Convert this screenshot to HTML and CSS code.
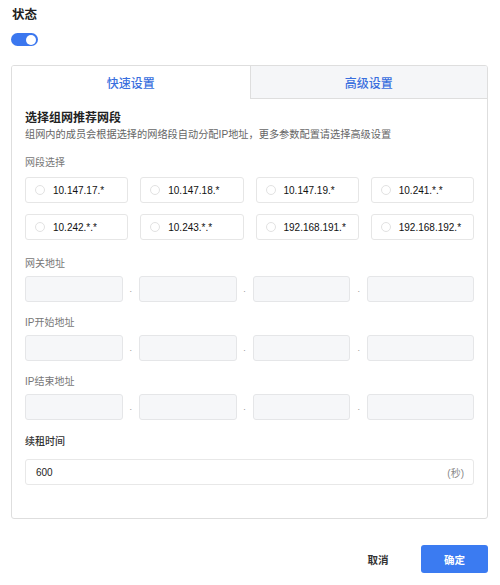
FILE: index.html
```html
<!DOCTYPE html>
<html lang="zh-CN">
<head>
<meta charset="utf-8">
<title>状态设置</title>
<link rel="stylesheet" href="styles.css">
</head>
<body>
<div class="page">
  <div class="title">状态</div>
  <div class="switch"><span class="knob"></span></div>

  <div class="card">
    <div class="tabs">
      <div class="tab active">快速设置</div>
      <div class="tab">高级设置</div>
    </div>
    <div class="card-body">
      <div class="heading">选择组网推荐网段</div>
      <div class="desc">组网内的成员会根据选择的网络段自动分配IP地址，更多参数配置请选择高级设置</div>

      <div class="field-label first">网段选择</div>
      <div class="radio-grid">
        <label class="radio"><span class="dot"></span>10.147.17.*</label>
        <label class="radio"><span class="dot"></span>10.147.18.*</label>
        <label class="radio"><span class="dot"></span>10.147.19.*</label>
        <label class="radio"><span class="dot"></span>10.241.*.*</label>
        <label class="radio"><span class="dot"></span>10.242.*.*</label>
        <label class="radio"><span class="dot"></span>10.243.*.*</label>
        <label class="radio"><span class="dot"></span>192.168.191.*</label>
        <label class="radio"><span class="dot"></span>192.168.192.*</label>
      </div>

      <div class="field-label gw">网关地址</div>
      <div class="ip-row">
        <div class="ip-box"></div><span class="sep">.</span>
        <div class="ip-box"></div><span class="sep">.</span>
        <div class="ip-box"></div><span class="sep">.</span>
        <div class="ip-box"></div>
      </div>

      <div class="field-label">IP开始地址</div>
      <div class="ip-row">
        <div class="ip-box"></div><span class="sep">.</span>
        <div class="ip-box"></div><span class="sep">.</span>
        <div class="ip-box"></div><span class="sep">.</span>
        <div class="ip-box"></div>
      </div>

      <div class="field-label">IP结束地址</div>
      <div class="ip-row">
        <div class="ip-box"></div><span class="sep">.</span>
        <div class="ip-box"></div><span class="sep">.</span>
        <div class="ip-box"></div><span class="sep">.</span>
        <div class="ip-box"></div>
      </div>

      <div class="field-label strong">续租时间</div>
      <div class="lease">
        <span class="lease-value">600</span>
        <span class="lease-unit">(秒)</span>
      </div>
    </div>
  </div>

  <div class="footer">
    <button class="btn cancel">取消</button>
    <button class="btn primary">确定</button>
  </div>
</div>
</body>
</html>
```

FILE: styles.css
```css
* {
  box-sizing: border-box;
}

body {
  margin: 0;
  background: #ffffff;
  font-family: "Liberation Sans", "Noto Sans CJK SC", sans-serif;
  color: #222;
}

.page {
  padding: 7px 12px 0 11px;
}

.title {
  font-size: 12.5px;
  line-height: 16px;
  font-weight: bold;
  color: #222;
  padding-left: 1px;
}

/* toggle switch, on state */
.switch {
  margin-top: 10px;
  width: 27px;
  height: 13px;
  border-radius: 7px;
  background: #3b77ef;
  display: flex;
  align-items: center;
  justify-content: flex-end;
  padding-right: 2px;
}

.knob {
  width: 10px;
  height: 10px;
  border-radius: 50%;
  background: #fff;
}

.card {
  margin-top: 19px;
  border: 1px solid #dedede;
  border-radius: 3px;
  overflow: hidden;
}

.tabs {
  display: grid;
  grid-template-columns: 1fr 1fr;
}

.tab {
  height: 33px;
  display: flex;
  align-items: center;
  justify-content: center;
  font-size: 12px;
  font-weight: 500;
  color: #3a6fde;
  background: #f5f6f8;
  border-left: 1px solid #dedede;
  border-bottom: 1px solid #dedede;
}

.tab.active {
  background: #fff;
  border-left: none;
  border-bottom-color: transparent;
}

.card-body {
  padding: 10px 13px 33px 13px;
}

.heading {
  font-size: 12px;
  line-height: 18px;
  font-weight: bold;
  color: #222;
}

.desc {
  font-size: 10.2px;
  line-height: 16px;
  color: #666;
}

.field-label {
  font-size: 10px;
  line-height: 16px;
  color: #777;
  margin-top: 13px;
  margin-bottom: 4px;
}

.field-label.first {
  margin-top: 12px;
  margin-bottom: 6px;
}

.field-label.gw {
  margin-top: 16px;
}

.field-label.strong {
  color: #333;
  font-weight: 500;
  margin-top: 14px;
  margin-bottom: 9px;
}

.radio-grid {
  display: grid;
  grid-template-columns: repeat(4, 1fr);
  column-gap: 12px;
  row-gap: 11px;
}

.radio {
  height: 26px;
  border: 1px solid #e6e6e6;
  border-radius: 3px;
  display: flex;
  align-items: center;
  padding-left: 9px;
  gap: 8px;
  font-size: 10px;
  color: #111;
}

.dot {
  width: 10px;
  height: 10px;
  border-radius: 50%;
  border: 1px solid #e2e2e2;
  background: #fff;
}

/* four octet boxes; the last one runs to the card edge */
.ip-row {
  display: grid;
  grid-template-columns: 98fr 16px 98fr 16px 98fr 17px 107fr;
  align-items: center;
}

.ip-box {
  height: 26px;
  background: #f6f7f9;
  border: 1px solid #e5e6e8;
  border-radius: 3px;
}

.sep {
  text-align: center;
  font-size: 9px;
  color: #999;
  line-height: 10px;
}

.lease {
  height: 26px;
  border: 1px solid #e8e8e8;
  border-radius: 3px;
  display: flex;
  align-items: center;
  justify-content: space-between;
  padding: 0 9px 0 10px;
  font-size: 10px;
}

.lease-value {
  color: #222;
}

.lease-unit {
  color: #888;
}

.footer {
  margin-top: 26px;
  display: flex;
  justify-content: flex-end;
  gap: 13px;
}

.btn {
  height: 28px;
  border: none;
  border-radius: 3px;
  font-family: inherit;
  font-size: 10.5px;
  font-weight: bold;
  cursor: pointer;
}

.btn.cancel {
  width: 60px;
  background: transparent;
  color: #333;
}

.btn.primary {
  width: 67px;
  background: #3b7bf1;
  color: #fff;
}
```
